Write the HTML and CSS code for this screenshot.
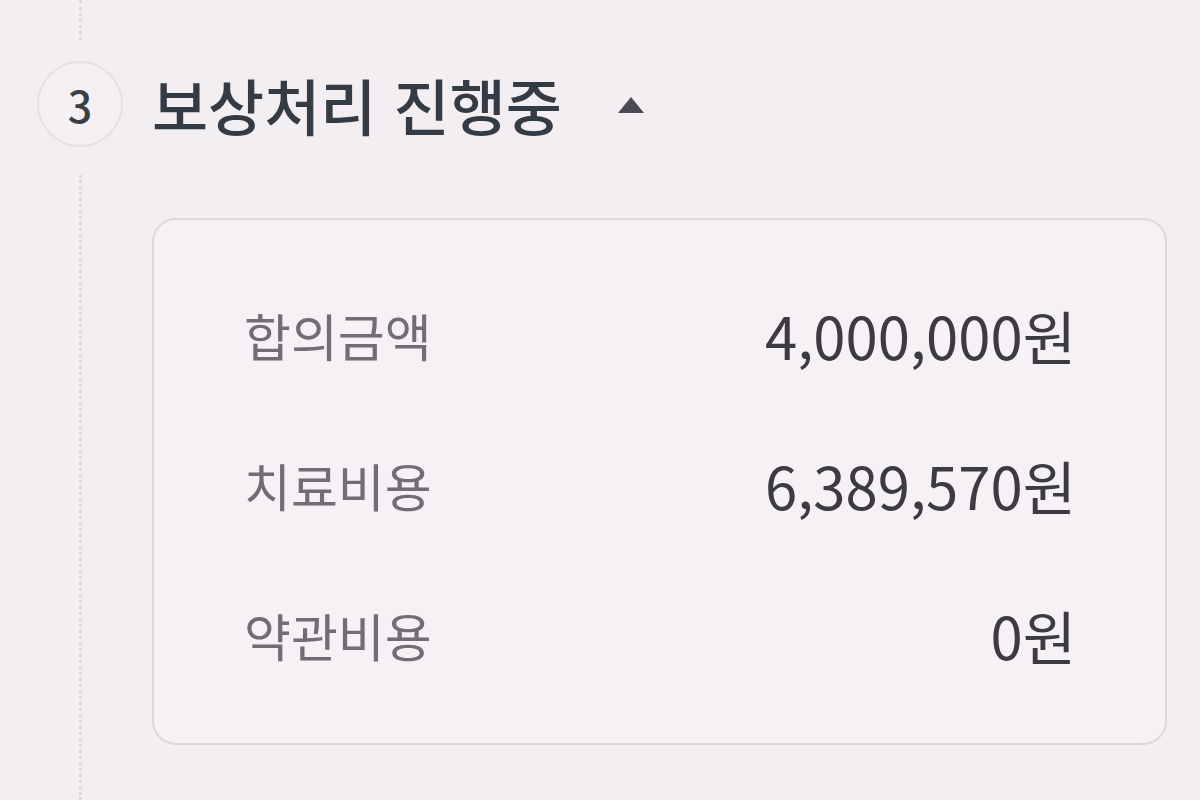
FILE: index.html
```html
<!DOCTYPE html>
<html lang="ko">
<head>
<meta charset="utf-8">
<title>보상처리 진행중</title>
<link rel="stylesheet" href="styles.css">
</head>
<body>
<div class="step">
  <div class="rail">
    <div class="seg seg-top"></div>
    <div class="circle">3</div>
    <div class="seg seg-bottom"></div>
  </div>
  <div class="content">
    <div class="header">
      <h2 class="title">보상처리 진행중</h2>
      <svg class="caret" width="28" height="18" viewBox="0 0 28 18"><polygon points="14,1 27,17 1,17" fill="#4b4a52"/></svg>
    </div>
    <div class="card">
      <div class="row"><span class="label">합의금액</span><span class="value">4,000,000원</span></div>
      <div class="row"><span class="label">치료비용</span><span class="value">6,389,570원</span></div>
      <div class="row"><span class="label">약관비용</span><span class="value">0원</span></div>
    </div>
  </div>
</div>
</body>
</html>
```
FILE: styles.css
```css
* { box-sizing: border-box; }
html, body {
  margin: 0;
  padding: 0;
  background: #f2eef2;
  font-family: "Noto Sans CJK KR", "Noto Sans", sans-serif;
}
.step {
  display: flex;
  min-height: 800px;
  padding-left: 37px;
  column-gap: 29px;
}
.rail {
  width: 86px;
  display: flex;
  flex-direction: column;
  align-items: center;
}
.seg {
  width: 0;
  border-left: 3px dotted #dcd8dc;
}
.seg-top {
  height: 40px;
  margin-bottom: 21px;
}
.seg-bottom {
  flex: 1;
  margin-top: 28px;
}
.circle {
  width: 86px;
  height: 86px;
  border-radius: 50%;
  border: 2px solid #e4e0e4;
  background: #f4f0f4;
  display: flex;
  align-items: center;
  justify-content: center;
  font-size: 43px;
  font-weight: 500;
  color: #3a3f48;
  line-height: 1;
}
.content {
  flex: 1;
  padding-top: 61px;
  padding-right: 33px;
}
.header {
  height: 86px;
  display: flex;
  align-items: center;
}
.title {
  margin: 0;
  font-size: 61px;
  font-weight: 500;
  color: #343b45;
  line-height: 1;
}
.caret {
  margin-left: 55px;
  margin-top: 2px;
}
.card {
  margin-top: 71px;
  height: 527px;
  border: 2px solid #dcd8dc;
  border-radius: 24px;
  background: #f5f1f5;
  padding: 40px 89px 0 90px;
}
.row {
  height: 150px;
  display: flex;
  align-items: center;
  justify-content: space-between;
}
.label {
  font-size: 51px;
  color: #706d74;
}
.value {
  font-size: 58px;
  color: #3c3b41;
}
```
